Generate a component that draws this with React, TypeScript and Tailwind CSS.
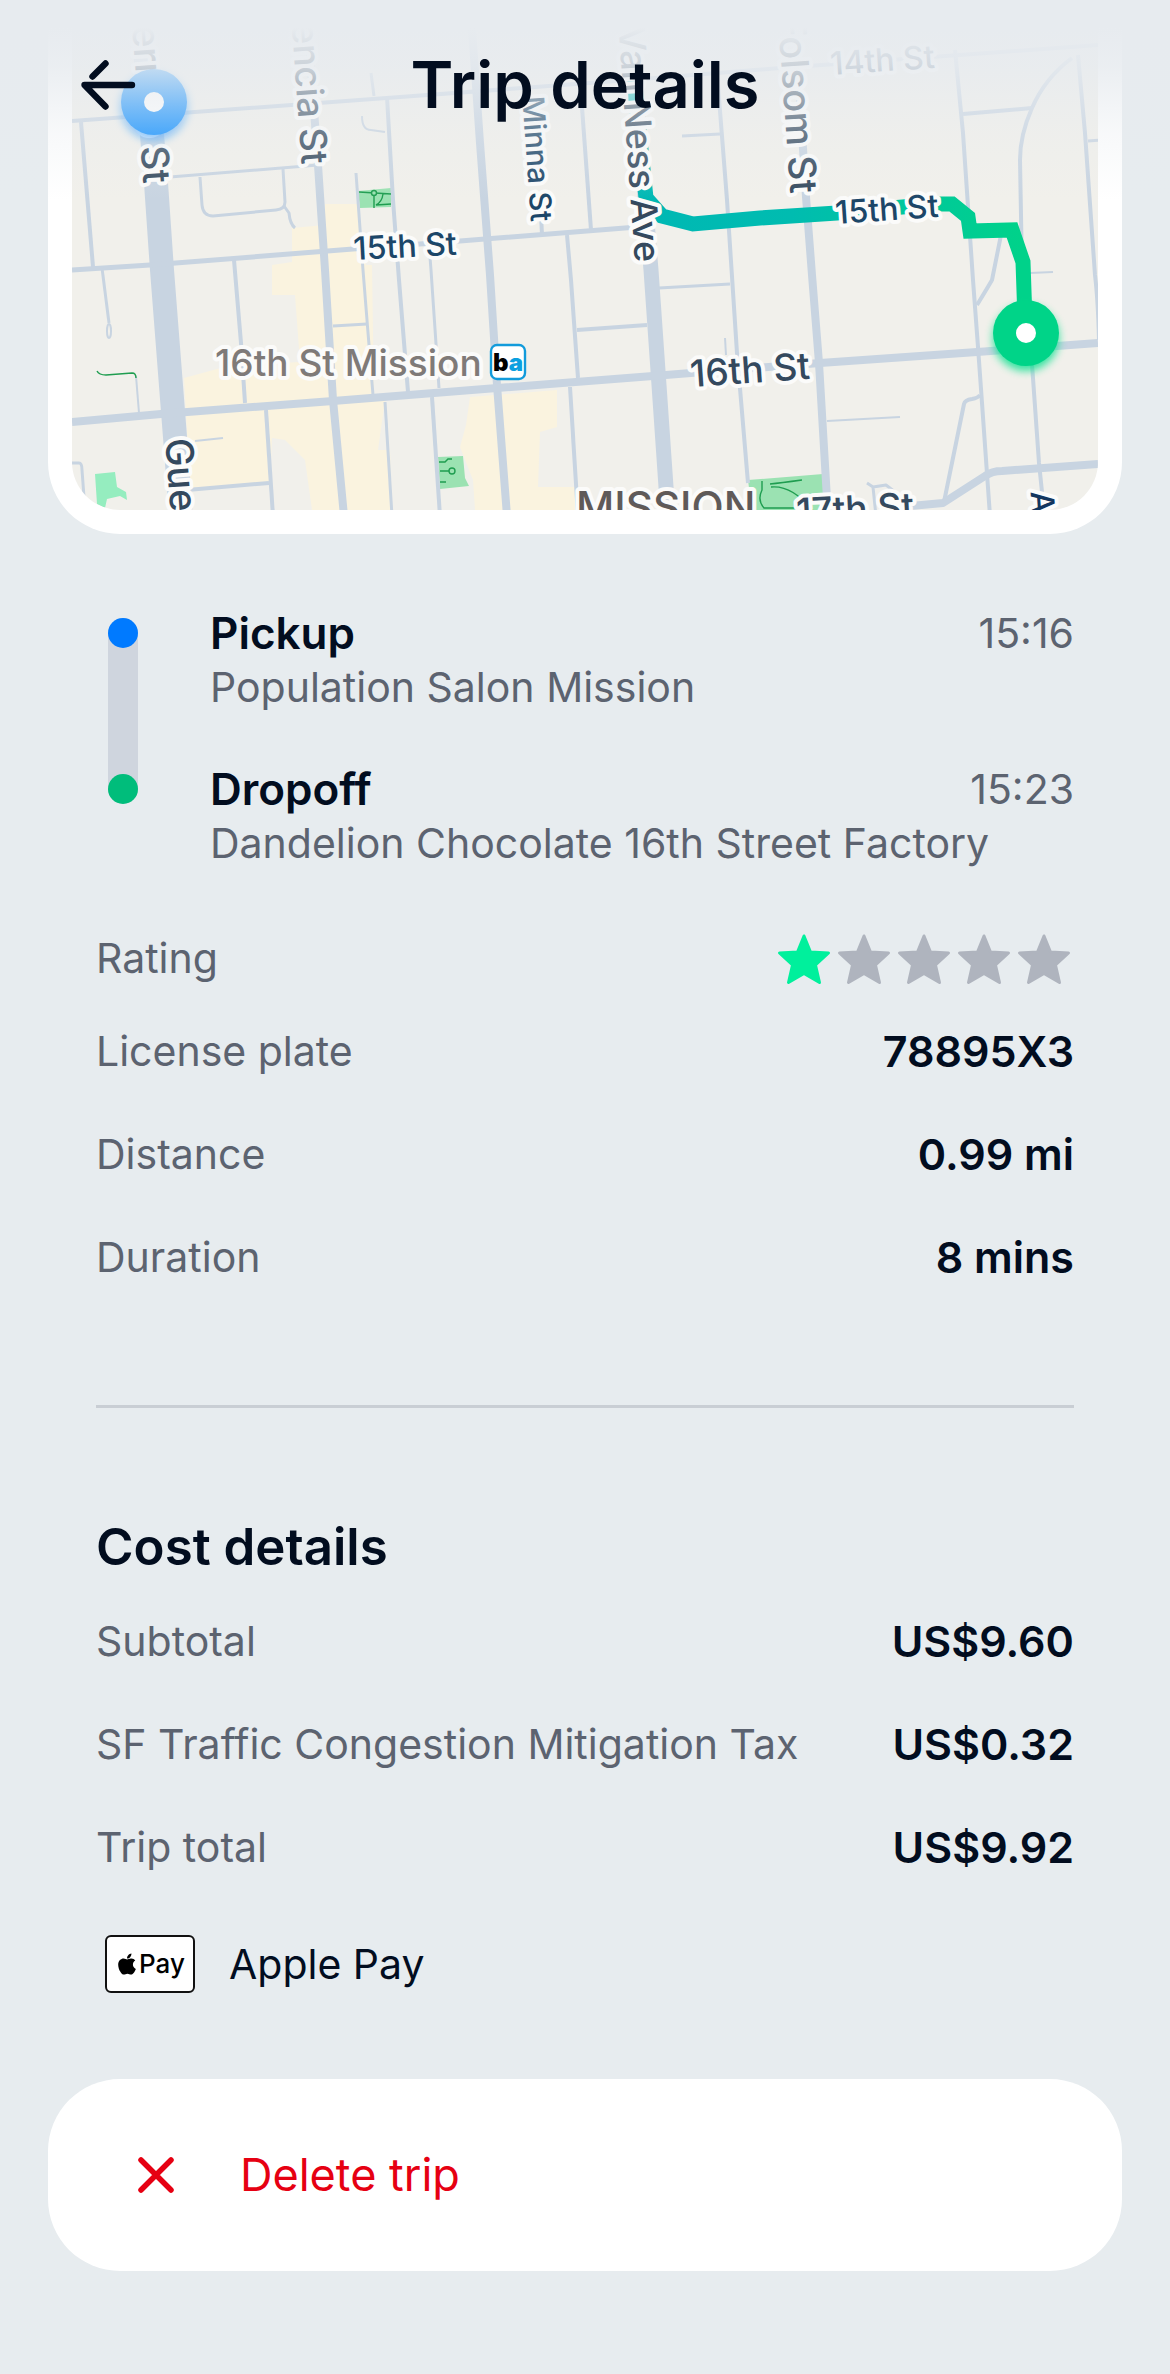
import type { ReactNode } from "react";
import { FaApple } from "react-icons/fa";

type Road = [width: number, d: string];

const ROADS: Road[] = [
  [24, "M145 50L156 183L162 270L175 437L181 516"],
  [8, "M306 0L318 165L325 270L333 400L344 516"],
  [4, "M81 122L93 267"],
  [4, "M72 121L400 97L630 80L780 68L1098 45"],
  [3, "M170 177L318 165"],
  [3, "M200 177L202 205Q203 216 213 216L276 210Q285 209 285 202L283 169"],
  [3, "M284 206L289 213Q290 224 295 228"],
  [2, "M362 116Q362 130 371 130L385 132"],
  [4, "M387 97L393 200L399 280L408 392"],
  [3, "M371 73L374 96"],
  [3, "M356 173L363 270L373 395"],
  [3, "M430 257L431 270L439 388"],
  [8, "M470 0L480 143L490 275L497 385L507 516"],
  [4, "M580 80L591 230"],
  [4, "M567 235L571 280L578 378"],
  [4, "M570 387L578 516"],
  [4, "M541 215L542 235"],
  [5, "M72 270L150 265L353 249L460 241L650 226"],
  [15, "M637 100L651 270L659 385L668 516"],
  [4, "M716 60L727 200L737 353L748 483"],
  [3, "M682 136L720 134"],
  [4, "M577 330L647 325"],
  [3, "M659 288L730 284"],
  [2, "M725 338L726 355"],
  [8, "M800 100L806 197L812 275L819 363L828 516"],
  [4, "M234 260L241 343L245 403"],
  [3, "M102 268L109 323"],
  [2, "M136 376L139 413"],
  [8, "M72 422L161 414L333 401L497 388L653 376L820 363L977 352L1098 343"],
  [3, "M333 326L367 324"],
  [2, "M195 441L223 438"],
  [4, "M187 490L269 483"],
  [4, "M266 410L273 516"],
  [3, "M385 402L392 516"],
  [4, "M432 397L440 516"],
  [3, "M72 463L79 463Q82 463 82 470L84 497"],
  [4, "M955 50L963 133L973 280L978 347L982 403L990 516"],
  [4, "M963 114L1032 108"],
  [4, "M1072 58Q1045 78 1032 108Q1020 135 1020 160L1022 270"],
  [4, "M1078 55L1085 133L1095 275Q1098 300 1099 340"],
  [3, "M1088 141L1100 140"],
  [4, "M1002 230L992 280Q988 287 977 305"],
  [2, "M1030 273L1053 272"],
  [4, "M1031 350L1039 463L1042 492"],
  [4, "M980 395Q978 398 972 399Q965 400 964 404L944 502"],
  [8, "M900 507L943 503L985 476Q992 471 1002 471L1098 464"],
  [2, "M827 421L900 417"],
  [3, "M867 483L873 487L886 485L895 492M873 487L876 516"],
];

const PARK_PATHS = [
  "M359 192L391 194M374 195V208M383 194Q382 202 376 205L391 204",
  "M439 462L445 462L448 459H452M440 471L449 471M440 482H446",
  "M762 481V490Q757 500 764 508H800Q812 508 818 514M770 484Q780 483 802 480M771 487Q792 485 812 510",
];

function Label({
  x, y, angle, size = 36, color = "#34495e", anchor = "start", weight = 500, children,
}: {
  x: number; y: number; angle: number; size?: number; color?: string;
  anchor?: "start" | "end"; weight?: number; children: string;
}) {
  return (
    <text
      transform={`translate(${x} ${y}) rotate(${angle})`}
      dy={Math.abs(angle) > 45 ? size * 0.36 : 0}
      fontSize={size}
      fontWeight={weight}
      fill={color}
      textAnchor={anchor}
      stroke="#fbfbfa"
      strokeWidth={8}
      strokeLinejoin="round"
      paintOrder="stroke"
    >
      {children}
    </text>
  );
}

function TripMap() {
  return (
    <svg viewBox="72 0 1026 510" className="block h-auto w-full" role="img" aria-label="Map of the trip route">
      <defs>
        <linearGradient id="route" gradientUnits="userSpaceOnUse" x1="640" y1="0" x2="1020" y2="0">
          <stop offset="0" stopColor="#00b8b4" />
          <stop offset="0.4" stopColor="#00bcb0" />
          <stop offset="1" stopColor="#00d28a" />
        </linearGradient>
        <filter id="glow" x="-50%" y="-50%" width="200%" height="200%">
          <feGaussianBlur stdDeviation="4" />
        </filter>
      </defs>
      <rect x="72" width="1026" height="510" fill="#f1f0eb" />
      <g fill="#faf3df">
        <polygon points="325,204 357,204 360,230 366,265 372,265 374,400 385,400 378,450 390,450 392,510 312,510 305,460 285,440 272,438 270,483 190,488 184,378 228,366 300,362 295,295 272,295 272,265 292,262 292,228 325,225" />
        <polygon points="470,397 557,390 557,427 540,432 538,487 575,487 578,510 475,510 473,480 460,447 466,425" />
      </g>
      <g fill="#9be2b2">
        <polygon points="358,191 391,188 391,207 360,208" />
        <polygon points="438,457 463,456 465,478 469,486 440,489" />
        <polygon points="748,480 823,474 825,512 752,512" />
      </g>
      <polygon fill="#95edbf" points="95,474 115,472 117,487 126,492 127,500 120,496 107,499 105,508 97,504" />
      <g fill="none" stroke="#c8d4e1" strokeLinejoin="round">
        {ROADS.map(([width, d]) => <path key={d} d={d} strokeWidth={width} />)}
        <ellipse cx="109" cy="331" rx="2" ry="7" strokeWidth="2" />
      </g>
      <g fill="none" stroke="#1f9d50" strokeWidth="1.4">
        {PARK_PATHS.map((d) => <path key={d} d={d} />)}
        <circle cx="374" cy="193" r="2.5" fill="#9be2b2" />
        <circle cx="452" cy="471" r="3" fill="#9be2b2" />
        <path d="M97 371Q99 375 106 375L132 373Q136 373 136 378" />
      </g>
      <path
        d="M634 60L636 100L646 198L662 216L693 224L760 218L837 213L935 204L952 204L968 217L970 231L1012 230L1023 262L1025 320"
        fill="none"
        stroke="url(#route)"
        strokeWidth="15"
      />

      <Label x={157} y={183} angle={86} size={38} anchor="end">Guerrero St</Label>
      <Label x={315} y={164} angle={86} size={37} anchor="end">Valencia St</Label>
      <Label x={804} y={193} angle={86} size={38} anchor="end">Folsom St</Label>
      <Label x={648} y={262} angle={86} anchor="end">Van Ness Ave</Label>
      <Label x={533} y={96} angle={86} size={30} color="#1c4668">Minna St</Label>
      <Label x={179} y={438} angle={86} size={38}>Guerrero</Label>
      <Label x={1042} y={491} angle={86} size={32} color="#12365f">A</Label>
      <Label x={831} y={75} angle={-4} size={32} color="#5d748c">14th St</Label>
      <Label x={354} y={260} angle={-3} size={32} color="#1c4668">15th St</Label>
      <Label x={836} y={224} angle={-4} size={32} color="#1c4668">15th St</Label>
      <Label x={691} y={387} angle={-4} size={37}>16th St</Label>
      <Label x={797} y={525} angle={-3} size={37}>17th St</Label>
      <Label x={576} y={522} angle={0} size={42} color="#5f5a59">MISSION</Label>
      <Label x={215} y={376} angle={0} size={37} color="#7f7a78">16th St Mission</Label>

      <rect x="491" y="345" width="34" height="34" rx="6" fill="#fff" stroke="#129bdb" strokeWidth="2.4" />
      <text x="493" y="371" fontSize="24" fontWeight="900">
        b<tspan fill="#0ba0e0">a</tspan>
      </text>

      <circle cx="154" cy="106" r="34" fill="#088cff" opacity="0.6" filter="url(#glow)" />
      <circle cx="154" cy="102" r="33" fill="#088cff" />
      <circle cx="154" cy="102" r="10" fill="#fff" />
      <circle cx="1026" cy="338" r="33" fill="#00e08a" opacity="0.8" filter="url(#glow)" />
      <circle cx="1026" cy="333" r="33" fill="#00d488" />
      <circle cx="1026" cy="333" r="10" fill="#fff" />
    </svg>
  );
}

function Stop({ title, place, time }: { title: string; place: string; time: string }) {
  return (
    <li>
      <div className="flex items-center justify-between text-[44px] leading-[54px]">
        <h2 className="font-semibold text-[#020d1f]">{title}</h2>
        <time className="text-[41px] text-[#5c6370]">{time}</time>
      </div>
      <p className="text-[41px] leading-[54px] text-[#5c6370]">{place}</p>
    </li>
  );
}

function Row({ label, children }: { label: string; children: ReactNode }) {
  return (
    <div className="flex items-center justify-between leading-[55px]">
      <dt className="text-[41px] text-[#5c6370]">{label}</dt>
      <dd className="text-[43px] font-semibold text-[#020d1f]">{children}</dd>
    </div>
  );
}

function Stars({ value }: { value: number }) {
  return (
    <span className="flex h-[55px] items-center" role="img" aria-label={`${value} out of 5 stars`}>
      {[1, 2, 3, 4, 5].map((n) => (
        <svg key={n} viewBox="0 0 60 52" className={n <= value ? "h-[52px] w-[60px] text-[#00f09c]" : "h-[52px] w-[60px] text-[#afb4be]"}>
          <polygon
            points="30,3 36.5,19 54.5,20 41.5,32 45.5,49.5 30,40.5 14.5,49.5 18.5,32 5.5,20 23.5,19"
            fill="currentColor"
            stroke="currentColor"
            strokeWidth="3"
            strokeLinejoin="round"
          />
        </svg>
      ))}
    </span>
  );
}

export default function App() {
  return (
    <main className="relative min-h-screen bg-[#e7ecef] px-12 pb-[102px] font-['Inter',sans-serif]">
      <section className="rounded-b-[72px] bg-white px-6 pb-6">
        <div className="overflow-hidden rounded-b-[48px]">
          <TripMap />
        </div>
      </section>

      <header className="absolute inset-x-0 top-0 grid h-[200px] grid-cols-[1fr_auto_1fr] items-start bg-[linear-gradient(to_bottom,#e7ebef_14%,#e7ebefd9_33%,#e7ebef80_54%,#e7ebef4d_67%,#e7ebef00_100%)] px-[78px] pt-[45px]">
        <button type="button" aria-label="Back" className="flex h-20 w-[60px] items-center">
          <svg viewBox="0 0 60 60" className="size-[60px]" fill="none" stroke="#020d1f" strokeWidth="6.4" strokeLinecap="round" strokeLinejoin="round">
            <path d="M54 30H6.500L27.500 51.500M14.500 21.500L27.500 8.500" />
          </svg>
        </button>
        <h1 className="text-[65px] leading-[80px] font-semibold text-[#020d1f]">Trip details</h1>
      </header>

      <div className="px-12 pt-[72px]">
        <div className="flex gap-[72px] pl-3">
          <div className="mt-3 mb-[66px] flex w-[30px] flex-col justify-between rounded-full bg-[#cfd5de]">
            <span className="size-[30px] rounded-full bg-[#007aff]" />
            <span className="size-[30px] rounded-full bg-[#00bd7b]" />
          </div>
          <ol className="flex flex-1 flex-col gap-12">
            <Stop title="Pickup" place="Population Salon Mission" time="15:16" />
            <Stop title="Dropoff" place="Dandelion Chocolate 16th Street Factory" time="15:23" />
          </ol>
        </div>

        <dl className="mt-[61px] flex flex-col gap-12">
          <div className="-mb-[10px]">
            <Row label="Rating"><Stars value={1} /></Row>
          </div>
          <Row label="License plate">78895X3</Row>
          <Row label="Distance">0.99 mi</Row>
          <Row label="Duration">8 mins</Row>
        </dl>

        <hr className="mt-[120px] border-t-[3px] border-[#c9ced4]" />

        <h2 className="mt-[109px] text-[51px] leading-[60px] font-semibold text-[#020d1f]">Cost details</h2>
        <dl className="mt-[37px] flex flex-col gap-12">
          <Row label="Subtotal">US$9.60</Row>
          <Row label="SF Traffic Congestion Mitigation Tax">US$0.32</Row>
          <Row label="Trip total">US$9.92</Row>
        </dl>

        <div className="mt-[60px] flex items-center gap-[34px] pl-[9px]">
          <span className="flex h-[58px] w-[90px] items-center justify-center rounded-md border-2 border-[#111] bg-white text-[26px] leading-none font-medium text-black">
            <FaApple className="size-[24px]" />
            Pay
          </span>
          <span className="text-[41px] leading-[55px] text-[#020d1f]">Apple Pay</span>
        </div>
      </div>

      <button type="button" className="mt-[86px] flex h-48 w-full items-center gap-16 rounded-[72px] bg-white pl-[88px] text-[45px] text-[#e60012]">
        <svg viewBox="0 0 40 40" className="size-10" stroke="currentColor" strokeWidth="5.500" strokeLinecap="round">
          <path d="M5 5L35 35M35 5L5 35" />
        </svg>
        Delete trip
      </button>
    </main>
  );
}
